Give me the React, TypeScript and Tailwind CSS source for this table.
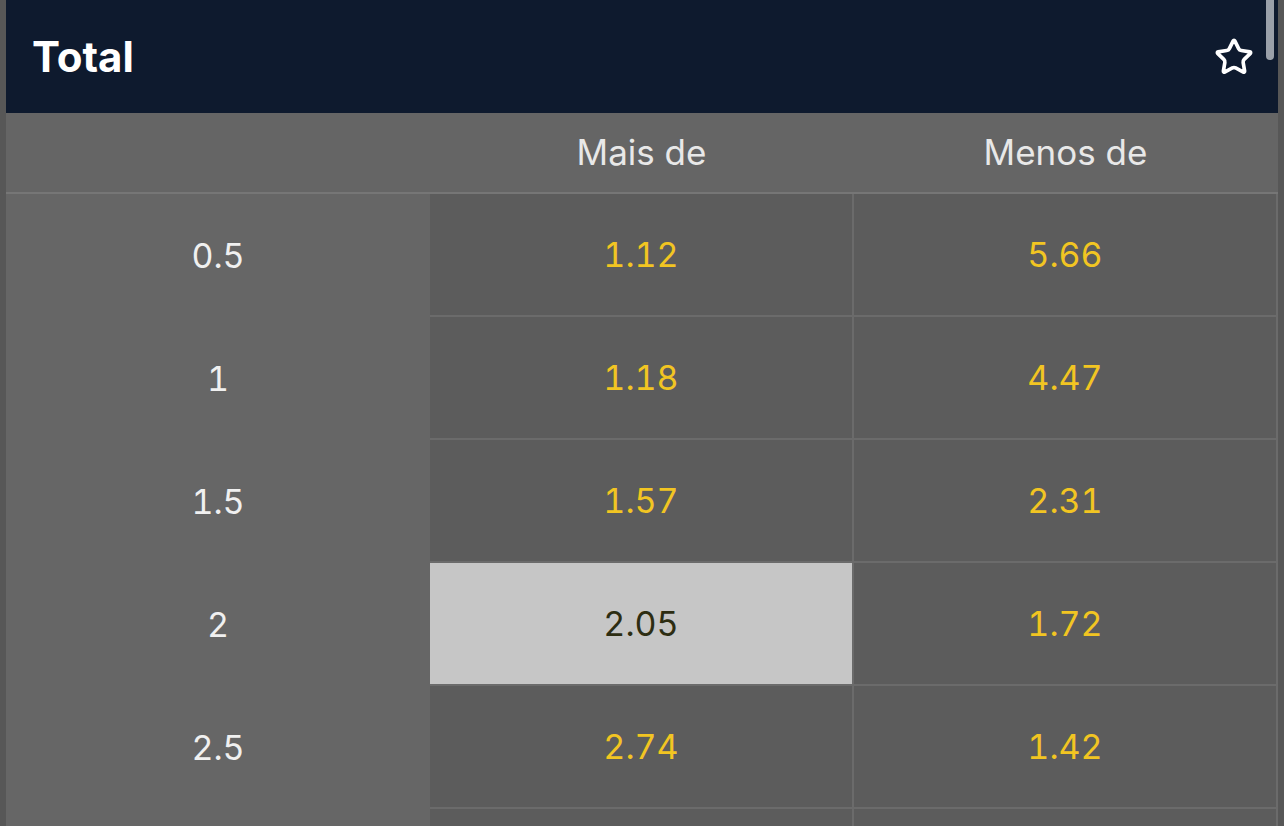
import { Star } from 'lucide-react';

const rows = [
  { line: '0.5', over: '1.12', under: '5.66' },
  { line: '1', over: '1.18', under: '4.47' },
  { line: '1.5', over: '1.57', under: '2.31' },
  { line: '2', over: '2.05', under: '1.72', selected: 'over' },
  { line: '2.5', over: '2.74', under: '1.42' },
];

function OddCell({ value, active }: { value?: string; active?: boolean }) {
  return (
    <div
      className={
        active
          ? 'flex-1 flex items-center justify-center bg-[#c6c6c6] text-[#2d2d12]'
          : 'flex-1 flex items-center justify-center bg-[#5c5c5c] text-[#f2c522]'
      }
    >
      {value}
    </div>
  );
}

export default function App() {
  return (
    <div
      className="relative flex h-[826px] w-full overflow-hidden bg-[#575757] px-[6px]"
      style={{ fontFamily: 'Inter, "Noto Sans", sans-serif' }}
    >
      <div className="flex flex-1 flex-col">
        <div className="flex h-[113px] shrink-0 items-center justify-between bg-[#0e1a2e] pl-[26px] pr-[24px]">
          <h2 className="text-[42px] font-bold text-white">Total</h2>
          <Star className="h-[40px] w-[40px] text-white" strokeWidth={2.2} />
        </div>

        <div className="grid h-[81px] shrink-0 grid-cols-[424px_423px_1fr] border-b-2 border-[#767676] bg-[#656565] text-[35px] text-[#e8e8e8]">
          <div />
          <div className="flex items-center justify-center">Mais de</div>
          <div className="flex items-center justify-center">Menos de</div>
        </div>

        <div className="flex flex-col text-[34px] tabular-nums">
          {rows.map((r) => (
            <div key={r.line} className="flex h-[123px] shrink-0">
              <div className="flex w-[424px] items-center justify-center bg-[#666666] text-[#f0f0f0]">
                {r.line}
              </div>
              <div className="flex flex-1 gap-[2px] bg-[#6b6b6b] pb-[2px] pr-[2px]">
                <OddCell value={r.over} active={r.selected === 'over'} />
                <OddCell value={r.under} />
              </div>
            </div>
          ))}
          <div className="flex h-[123px] shrink-0">
            <div className="w-[424px] bg-[#666666]" />
            <div className="flex flex-1 gap-[2px] bg-[#6b6b6b] pb-[2px] pr-[2px]">
              <OddCell />
              <OddCell />
            </div>
          </div>
        </div>
      </div>

      <div className="absolute right-[10px] top-0 h-[60px] w-[8px] rounded-b-full bg-[#9aa0a9]" />
    </div>
  );
}
